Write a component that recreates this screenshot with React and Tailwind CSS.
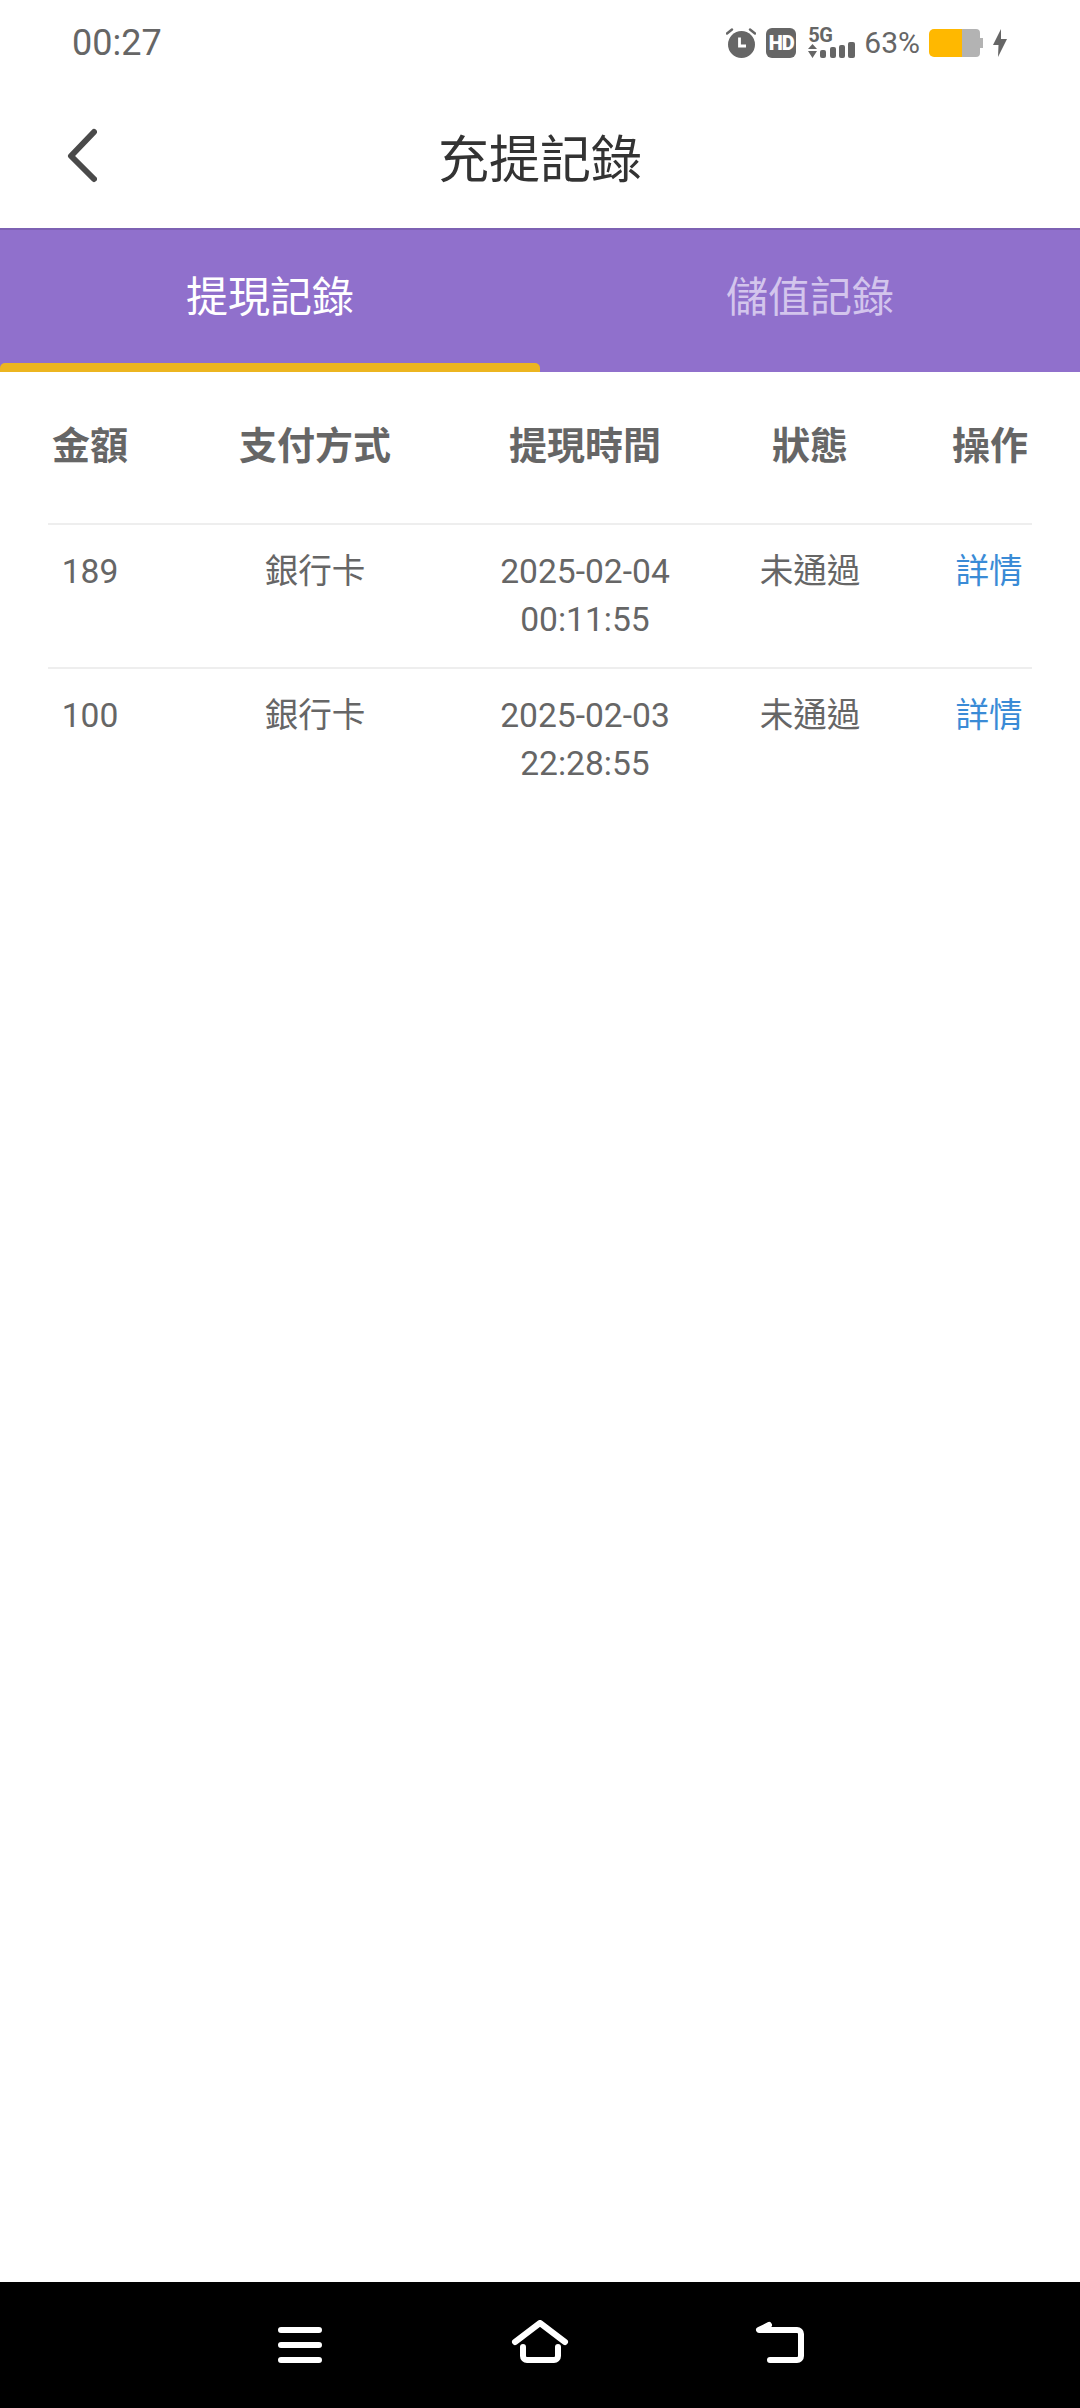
import React from 'react';

const rows = [
  { amount: '189', method: '銀行卡', date: '2025-02-04', time: '00:11:55', status: '未通過' },
  { amount: '100', method: '銀行卡', date: '2025-02-03', time: '22:28:55', status: '未通過' },
];

const columns = 'grid grid-cols-[84px_366px_174px_276px_84px] text-center';

const StatusIcons = () => (
  <div className="flex items-center">
    {/* alarm */}
    <svg width="30" height="30" viewBox="0 0 30 30" className="text-[#666666]">
      <circle cx="15.5" cy="16.5" r="13.5" fill="currentColor" />
      <path d="M1 5.5L6 1.5M29 5.5L24 1.5" stroke="currentColor" strokeWidth="2.4" strokeLinecap="round" />
      <path d="M13.5 9.5V18H20" fill="none" stroke="white" strokeWidth="2.8" />
    </svg>
    {/* HD */}
    <div className="ml-[10px] flex h-[30px] w-[30px] items-center justify-center rounded-[6px] bg-[#666666] text-[20px] leading-none font-black tracking-[-1px] text-white">
      HD
    </div>
    {/* 5G + signal */}
    <div className="relative ml-[12px] h-[30px] w-[47px]">
      <span className="absolute top-[-3px] left-0 text-[20px] leading-[20px] font-bold tracking-[-0.5px] text-[#666666]">5G</span>
      <svg width="47" height="30" viewBox="0 0 47 30" className="absolute top-0 left-0 text-[#666666]">
        <path d="M0 21L4.5 16L9 21ZM0 23H9L4.5 30Z" fill="currentColor" />
        <rect x="12" y="22" width="6" height="8" rx="2" fill="currentColor" />
        <rect x="22" y="19" width="6" height="11" rx="2" fill="currentColor" />
        <rect x="31" y="17" width="6" height="13" rx="2" fill="currentColor" />
        <rect x="40" y="14" width="7" height="16" rx="2" fill="currentColor" />
      </svg>
    </div>
    <span className="ml-[9px] text-[30px] leading-none text-[#666666]">63%</span>
    {/* battery */}
    <svg width="54" height="28" viewBox="0 0 54 28" className="ml-[9px]">
      <path d="M33 0H47a4 4 0 0 1 4 4V9h3V19h-3V24a4 4 0 0 1-4 4H33Z" fill="#b3b3b3" />
      <path d="M5 0H33V28H5a5 5 0 0 1-5-5V5a5 5 0 0 1 5-5Z" fill="#ffb800" />
    </svg>
    <svg width="14" height="28" viewBox="0 0 14 28" className="ml-[10px] text-[#666666]">
      <path d="M8 0L0 16H5.5L5 28L14 10H8Z" fill="currentColor" />
    </svg>
  </div>
);

export default function App() {
  return (
    <div className="flex h-[2408px] w-[1080px] flex-col overflow-hidden bg-white font-['Roboto','Noto_Sans_CJK_TC',sans-serif]">
      {/* status bar */}
      <div className="flex h-[86px] items-center justify-between pr-[73px] pl-[72px]">
        <span className="text-[36px] leading-none text-[#666666]">00:27</span>
        <StatusIcons />
      </div>

      {/* title */}
      <div className="relative flex h-[142px] items-center justify-center pt-[6px]">
        <svg width="32" height="56" viewBox="0 0 32 56" className="absolute top-[42px] left-[65px] text-[#4a4a4a]">
          <path d="M29 4L6 28L29 51" fill="none" stroke="currentColor" strokeWidth="6" strokeLinecap="round" strokeLinejoin="round" />
        </svg>
        <h1 className="text-[51px] leading-none font-normal text-[#333333]">充提記錄</h1>
      </div>

      {/* tabs */}
      <div className="flex h-[144px] border-t-2 border-[#7d61b3] bg-[#9070cc]">
        <div className="flex w-[540px] flex-col">
          <div className="flex flex-1 items-center justify-center pt-[2px] text-[42px] leading-none text-white">提現記錄</div>
          <div className="h-[9px] rounded-t-[5px] bg-[#ecb520]" />
        </div>
        <div className="flex w-[540px] flex-col">
          <div className="flex flex-1 items-center justify-center pt-[2px] text-[42px] leading-none text-[#d3c5ec]">儲值記錄</div>
          <div className="h-[9px]" />
        </div>
      </div>

      {/* table */}
      <div className="mx-[48px] w-[984px]">
        <div className={`${columns} h-[153px] items-center border-b-2 border-[#eeeeee] pb-[2px] text-[38px] font-bold text-[#666666]`}>
          <div>金額</div>
          <div>支付方式</div>
          <div>提現時間</div>
          <div>狀態</div>
          <div>操作</div>
        </div>
        {rows.map((row) => (
          <div key={row.date} className={`${columns} h-[144px] border-b-2 border-[#eeeeee] pt-[23px] text-[33.6px] leading-[48px] text-[#666666] last:border-b-0`}>
            <div>{row.amount}</div>
            <div>{row.method}</div>
            <div>
              <div>{row.date}</div>
              <div>{row.time}</div>
            </div>
            <div>{row.status}</div>
            <div className="pr-[2px] text-[#3a8bd6]">詳情</div>
          </div>
        ))}
      </div>

      <div className="flex-1" />

      {/* nav bar */}
      <div className="flex h-[126px] items-start justify-center gap-[180px] bg-black pt-[38px]">
        <svg width="60" height="44" viewBox="0 0 60 44" fill="none" stroke="white" strokeWidth="6" strokeLinecap="round">
          <path d="M11 10H49M11 25H49M11 40H49" />
        </svg>
        <svg width="60" height="44" viewBox="0 0 60 44" fill="none" stroke="white" strokeWidth="6" strokeLinecap="round" strokeLinejoin="round">
          <path d="M5 22L30 3L55 22" />
          <path d="M13 27V36a4 4 0 0 0 4 4H44a4 4 0 0 0 4-4V27" />
        </svg>
        <svg width="60" height="44" viewBox="0 0 60 44" fill="none" stroke="white" strokeWidth="6" strokeLinecap="round" strokeLinejoin="round">
          <path d="M19 5L9 10H47a4 4 0 0 1 4 4V36a4 4 0 0 1-4 4H20" />
        </svg>
      </div>
    </div>
  );
}
